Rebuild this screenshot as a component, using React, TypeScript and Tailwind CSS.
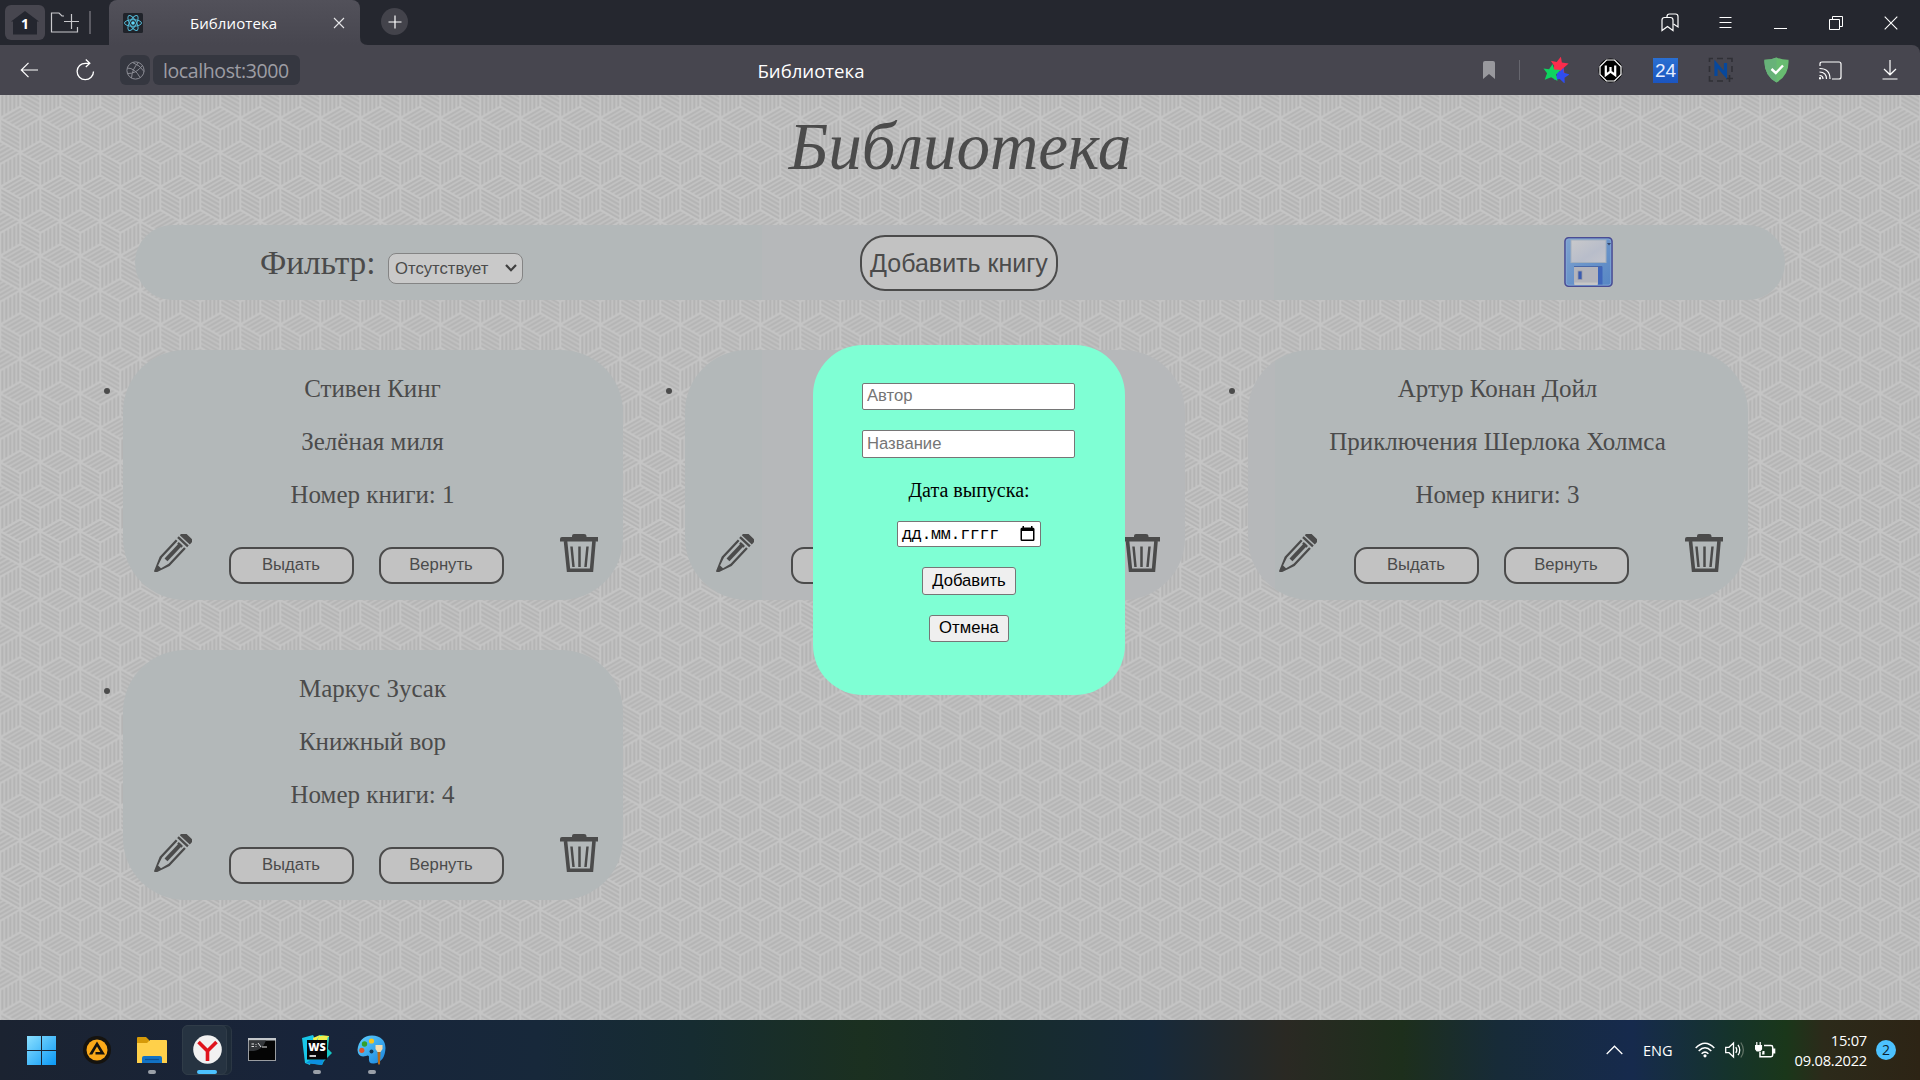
import React from "react";

const books = [
  { author: "Стивен Кинг", title: "Зелёная миля", id: "Номер книги: 1", bg: "bg-[#b3b8b9]" },
  {
    author: "",
    title: "",
    id: "",
    bg: "bg-[linear-gradient(90deg,#b3b8b9_77px,#b6b8ba_77px)]",
  },
  {
    author: "Артур Конан Дойл",
    title: "Приключения Шерлока Холмса",
    id: "Номер книги: 3",
    bg: "bg-[linear-gradient(90deg,#b6b8ba_27px,#b3b8b9_27px)]",
  },
  { author: "Маркус Зусак", title: "Книжный вор", id: "Номер книги: 4", bg: "bg-[#b3b8b9]" },
];

/* Cube wallpaper: three striped rhombic faces around every star vertex. */
const H = 11.4667;
const V = 22.9333;
function Cube({ x, y }: { x: number; y: number }) {
  const k = [0.1, 0.3, 0.5, 0.7, 0.9];
  return (
    <g transform={`translate(${x} ${y})`}>
      <g stroke="#b4b4b4" strokeWidth="2.1">
        {k.map((t) => (
          <React.Fragment key={t}>
            <line x1={-40 + 20 * t} y1={H * t} x2={-20 + 20 * t} y2={-H + H * t} />
            <line x1={-20 + 20 * t} y1={H - H * t} x2={-20 + 20 * t} y2={H - H * t + V} />
            <line x1="0" y1={V * t} x2="20" y2={V * t + H} />
          </React.Fragment>
        ))}
      </g>
      <path
        d={`M0 0L-20 ${-H}L-40 0L-20 ${H}ZM-20 ${H}V${H + V}L0 ${V}V0L20 ${H}V${H + V}L0 ${V}`}
        fill="none"
        stroke="#c5c5c5"
        strokeWidth="2"
      />
    </g>
  );
}

function Wallpaper() {
  return (
    <svg className="absolute inset-0 h-full w-full" aria-hidden="true">
      <defs>
        <pattern id="cubes" width="40" height="68.8" patternUnits="userSpaceOnUse" patternTransform="translate(0.3 23.2)">
          <rect width="40" height="68.8" fill="#c2c2c2" />
          {[-34.4, 0, 34.4, 68.8, 103.2].map((y, r) =>
            [0, 40, 80].map((x) => <Cube key={`${x}-${y}`} x={x - (r % 2 ? 0 : 20)} y={y} />)
          )}
        </pattern>
      </defs>
      <rect width="100%" height="100%" fill="url(#cubes)" />
    </svg>
  );
}

function Pencil() {
  return (
    <svg width="38" height="38" viewBox="0 0 38 38" fill="#4b4b4b">
      <g transform="translate(18.5 19) rotate(43)">
        <path d="M-6.8 -18V-20.500Q-6.800 -23.500 -3.800 -23.500H3.800Q6.800 -23.500 6.800 -20.500V-18Z" />
        <path d="M-6.800 -16.500H6.800V-14.200H-6.800Z" />
        <path
          fillRule="evenodd"
          d="M-6.800 -12.200H-4.500V10.500L-2 19H2L4.500 10.500V-12.200H6.800V11.500L1.300 25.500Q0 27 -1.300 25.500L-6.800 11.500Z"
        />
        <path d="M-2.900 -12.200H2.900V-10H-2.900Z" />
        <path d="M-2 -12.200H2V9.500H-2Z" />
      </g>
    </svg>
  );
}

function Trash() {
  return (
    <svg width="38" height="39" viewBox="0 0 38 39" fill="none" stroke="#4b4b4b">
      <path d="M0 7.500V5Q0 3 2 3H12V2Q12 0 14 0H24Q26.500 0 26.500 2V3H38V7.500Z" fill="#4b4b4b" stroke="none" />
      <path d="M5.500 7L8.500 36.300H31.500L34 7" strokeWidth="3.600" />
      <path d="M11.500 12.500L13.500 33M19.500 12.500V33M27.500 12.500L25.500 33" strokeWidth="2.500" />
    </svg>
  );
}

function Floppy() {
  return (
    <svg width="49" height="51" viewBox="0 0 49 51">
      <defs>
        <linearGradient id="fl" x1="0" y1="0" x2="1" y2="1">
          <stop offset="0" stopColor="#7fa3cf" />
          <stop offset="1" stopColor="#5585c4" />
        </linearGradient>
        <linearGradient id="flabel" x1="0" y1="0" x2="1" y2="1">
          <stop offset="0" stopColor="#c9c9cb" />
          <stop offset=".6" stopColor="#b8bdca" />
          <stop offset="1" stopColor="#c3c4cb" />
        </linearGradient>
      </defs>
      <rect x="1" y=".8" width="47" height="48.500" rx="3.500" fill="url(#fl)" stroke="#4a4c94" strokeWidth="1.600" />
      <rect x="2.300" y="2.100" width="44.400" height="46" rx="2.500" fill="none" stroke="#86a8d6" strokeWidth=".8" />
      <rect x="7" y="3" width="35" height="22.500" fill="url(#flabel)" stroke="#a3afbd" />
      <path d="M43 6h4l-2 2.500z" fill="#34466b" />
      <rect x="34" y="29.500" width="4.500" height="18" fill="#3f66bb" />
      <rect x="10" y="29.500" width="24" height="18" fill="#b3b4bb" />
      <path d="M10 29.500h28" stroke="#4967a8" />
      <rect x="10.500" y="45.500" width="23" height="2.500" fill="#c6c6c6" />
      <rect x="14" y="34" width="4" height="8.500" fill="#3a5bb0" stroke="#9a9ca8" strokeWidth=".8" />
    </svg>
  );
}

function TabStrip() {
  return (
    <div className="flex h-[45px] bg-[#25272f] text-white">
      <div className="ml-[5px] mt-[5px] flex h-[35px] w-10 items-center justify-center rounded-md bg-[#47464f]">
        <div className="grid place-items-center">
          <svg className="col-start-1 row-start-1" width="30" height="26" viewBox="0 0 30 26">
            <path d="M15 1L29 11.500H27V24.500H3V11.500H1Z" fill="#24262f" />
          </svg>
          <span className="col-start-1 row-start-1 pt-[2px] font-['Open_Sans',sans-serif] text-[14px] font-bold leading-4">1</span>
        </div>
      </div>
      <svg className="ml-[5px] mt-[11px]" width="30" height="23" viewBox="0 0 30 23" fill="none" stroke="#c9c9cd" strokeWidth="1.200">
        <path d="M14 5H12L9 2H1.500V21H27.500V16M14 10.500H29M21.500 3V18" />
      </svg>
      <div className="ml-[9px] mt-[11px] h-[23px] w-[2px] bg-[#5b5b63]" />
      <div className="ml-[18px] flex h-[45px] w-[251px] items-center rounded-t-lg bg-gradient-to-b from-[#52515a] to-[#47464f]">
        <svg className="ml-[14px]" width="20" height="20" viewBox="0 0 20 20">
          <rect width="20" height="20" rx="1.500" fill="#20232a" />
          <g fill="none" stroke="#53b9d6" strokeWidth="1">
            <ellipse cx="10" cy="10" rx="8.500" ry="3.300" />
            <ellipse cx="10" cy="10" rx="8.500" ry="3.300" transform="rotate(60 10 10)" />
            <ellipse cx="10" cy="10" rx="8.500" ry="3.300" transform="rotate(120 10 10)" />
          </g>
          <circle cx="10" cy="10" r="1.800" fill="#61dafb" />
        </svg>
        <div className="ml-[47px] w-[116px] whitespace-nowrap font-['Open_Sans',sans-serif] text-[15px] leading-5 tracking-[0.08px]">
          Библиотека
        </div>
        <svg className="ml-[27px]" width="12" height="12" viewBox="0 0 12 12" stroke="#e6e6e8" strokeWidth="1.100">
          <path d="M1 1L11 11M11 1L1 11" />
        </svg>
      </div>
      <svg width="8" height="45" viewBox="0 0 8 45">
        <path d="M0 37Q0 45 8 45H0Z" fill="#47464f" />
      </svg>
      <div className="ml-[13px] mt-2 flex h-[27px] w-[27px] items-center justify-center rounded-full bg-[#43434b]">
        <svg width="14" height="14" viewBox="0 0 14 14" stroke="#fff" strokeWidth="1.200">
          <path d="M7 0.500V13.500M.5 7H13.500" />
        </svg>
      </div>
      <div className="ml-auto mr-[2px] flex h-[45px]">
        <div className="flex w-[54px] items-center justify-center">
          <svg width="18" height="19" viewBox="0 0 18 19" fill="none" stroke="#fff" strokeWidth="1.200">
            <path d="M1 17.500V7Q1 4.500 3.500 4.500H9.500Q12 4.500 12 7V17.500L6.500 13.500Z" />
            <path d="M6 4V3.500Q6 1 8.500 1H14.500Q17 1 17 3.500V14L12.500 11" />
          </svg>
        </div>
        <div className="ml-px flex w-[55px] items-center justify-center">
          <svg width="13" height="13" viewBox="0 0 13 13" stroke="#fff" strokeWidth="1">
            <path d="M0.500 1.500H12.500M.5 6.500H12.500M.5 11.500H12.500" />
          </svg>
        </div>
        <div className="flex w-[55px] items-center justify-center">
          <div className="mt-3 h-px w-[13px] bg-white" />
        </div>
        <div className="flex w-[55px] items-center justify-center">
          <svg width="14" height="14" viewBox="0 0 14 14" fill="none" stroke="#fff">
            <path d="M.5 3.500H10.500V13.500H.5ZM3.500 3V.5H13.500V10.500H11" />
          </svg>
        </div>
        <div className="flex w-[55px] items-center justify-center">
          <svg width="14" height="14" viewBox="0 0 14 14" stroke="#fff" strokeWidth="1.100">
            <path d="M.7 .7L13.300 13.300M13.300 .7L.7 13.300" />
          </svg>
        </div>
      </div>
    </div>
  );
}

const star = "M0 -9L2.200 -3.500L9 -4L5 1.500L7.500 8L.3 5L-6 8.500L-4.500 1.500L-9 -3L-3 -3Z";

function Toolbar() {
  return (
    <div className="bg-[#25272f]">
      <div className="grid h-[50px] grid-cols-[757px_108px_1fr] items-center rounded-tr-lg bg-[#47464f] text-white">
        <div className="flex items-center">
          <svg className="ml-[20px]" width="19" height="16" viewBox="0 0 19 16" fill="none" stroke="#fff" strokeWidth="1.200">
            <path d="M18 8H1.500M8.500 .8L1.300 8L8.500 15.200" />
          </svg>
          <svg className="ml-[37px]" width="19" height="22" viewBox="0 0 19 22" fill="none" stroke="#fff" strokeWidth="1.300">
            <path d="M17.500 12.500A8.200 8.200 0 1 1 9.500 4.300H13.500M9.800 .5L13.800 4.300L9.800 8" />
          </svg>
          <div className="ml-[25px] flex h-[30px] w-[30px] items-center justify-center rounded-md bg-[#353740]">
            <svg width="19" height="19" viewBox="0 0 19 19" fill="none" stroke="#8b8c94" strokeWidth="1">
              <circle cx="9.500" cy="9.500" r="8.600" />
              <path d="M1.300 7Q9 7 14 16.500M6.500 1.500Q14 4 18 10.500M12.500 1.500Q6 8 5.500 17M1.500 12.500Q10 13 16.500 4.500" />
            </svg>
          </div>
          <div className="ml-[3px] flex h-[30px] w-[147px] items-center rounded-md bg-[#353740] pl-[10px] pt-[2px] font-['Open_Sans',sans-serif] text-[19.500px] leading-6 tracking-[-0.4px] text-[#9d9da4]">
            localhost:3000
          </div>
        </div>
        <div className="flex justify-center whitespace-nowrap pt-[2px] font-['Open_Sans',sans-serif] text-[18.600px] leading-6">
          Библиотека
        </div>
        <div className="flex items-center justify-end">
          <svg width="12" height="18" viewBox="0 0 12 18">
            <path d="M0 18V2Q0 0 2 0H10Q12 0 12 2V18L6 13Z" fill="#98989d" />
          </svg>
          <div className="ml-6 h-5 w-px bg-[#66666e]" />
          <div className="ml-2 flex w-[55px] justify-center">
            <svg width="26" height="26" viewBox="0 0 26 26">
              <path d={star} transform="translate(16 8.500) rotate(12)" fill="#fb2c4c" />
              <path d={star} transform="translate(18 18) rotate(20) scale(.85)" fill="#2f4df0" />
              <path d={star} transform="translate(8.500 15.500) rotate(8) scale(.95)" fill="#0fd45f" />
            </svg>
          </div>
          <div className="flex w-[55px] justify-center">
            <svg width="25" height="25" viewBox="0 0 25 25">
              <circle cx="12.500" cy="12.500" r="12" fill="#000" />
              <path d="M8.500 2H16.500L23 8.500V16.500L16.500 23H8.500L2 16.500V8.500Z" fill="#000" stroke="#fff" strokeWidth="1.200" />
              <path d="M7.800 7.500V17L12.500 13.500L17.200 17V7.500M12.500 9V14" fill="none" stroke="#fff" strokeWidth="2.200" />
            </svg>
          </div>
          <div className="flex w-[55px] justify-center">
            <div className="flex h-[25px] w-[25px] items-center justify-center bg-gradient-to-b from-[#2a6fd2] to-[#1b55c0] font-['Liberation_Sans',sans-serif] text-[19px] leading-none text-[#e6eeff]">
              24
            </div>
          </div>
          <div className="flex w-[55px] justify-center">
            <svg width="26" height="26" viewBox="0 0 26 26" fill="none">
              <path d="M5 1.500H1.500V5M9 1.500H15M19 1.500H24V5M24 9V15M1.500 9V15M1.500 19V24H5M9 24H15M18 21.500H25M21.500 18V25" stroke="#303036" strokeWidth="1.600" />
              <path d="M8 19V7L17.500 18V6" stroke="#07489c" strokeWidth="3.200" />
            </svg>
          </div>
          <div className="ml-px flex w-[55px] justify-center">
            <svg width="25" height="26" viewBox="0 0 25 26">
              <path d="M12.500 .5Q18 3 24.500 2.800Q25.500 18 12.500 25.500Q-.5 18 .5 2.800Q7 3 12.500 .5Z" fill="#68bc71" />
              <path d="M12.500 .5Q7 3 .5 2.800Q-.5 18 12.500 25.500Z" fill="#67b279" />
              <path d="M7.500 12L11.800 16L19 8.500" fill="none" stroke="#fff" strokeWidth="2.400" />
            </svg>
          </div>
          <div className="-ml-px flex w-[55px] justify-center">
            <svg width="23" height="19" viewBox="0 0 23 19" fill="none" stroke="#fff" strokeWidth="1.200">
              <path d="M1 5V3Q1 1 3 1H20Q22 1 22 3V16Q22 18 20 18H13" />
              <path d="M.5 14.500Q4 14.500 4 18M.5 11Q7.500 11 7.500 18M.5 7.500Q11 7.500 11 18" />
              <circle cx="1" cy="17.300" r=".6" />
            </svg>
          </div>
          <div className="flex w-[62px] justify-center pl-[2px]">
            <svg width="16" height="20" viewBox="0 0 16 20" fill="none" stroke="#fff" strokeWidth="1.200">
              <path d="M8 0V14.500M2 9L8 14.800L14 9M.5 19H15.500" />
            </svg>
          </div>
        </div>
      </div>
    </div>
  );
}

function Task({ children, dot }: { children: React.ReactNode; dot?: boolean }) {
  return (
    <div className="flex h-[60px] w-[55px] flex-col items-center">
      <div className="flex h-[60px] items-center pt-0">{children}</div>
      <div className={dot ? "-mt-[10px] h-1 w-2 shrink-0 rounded-full bg-[#9aa0a8]" : "hidden"} />
    </div>
  );
}

function Taskbar() {
  return (
    <div className="flex h-[60px] items-center bg-[linear-gradient(90deg,#1b2331_0%,#18243a_16%,#17283a_28%,#162c31_36%,#1b3020_45%,#172c2b_52%,#17293a_60%,#2a2923_67%,#1d2f1c_73%,#172b38_78%,#162a4d_85%,#15332c_90%,#1a371a_93%,#2c2a1a_95%,#2d2415_100%)] pl-[14px] font-['Open_Sans',sans-serif] text-white">
      <Task>
        <svg width="29" height="29" viewBox="0 0 29 29">
          <defs>
            <linearGradient id="win" x1="0" y1="0" x2="1" y2="1">
              <stop offset="0" stopColor="#8be0ff" />
              <stop offset="1" stopColor="#0a98f5" />
            </linearGradient>
          </defs>
          <path d="M0 0H14V14H0ZM15 0H29V14H15ZM0 15H14V29H0ZM15 15H29V29H15Z" fill="url(#win)" />
        </svg>
      </Task>
      <Task>
        <svg width="28" height="28" viewBox="0 0 28 28">
          <circle cx="14" cy="14" r="14" fill="#15130f" />
          <circle cx="14" cy="14" r="10.500" fill="#fba919" />
          <path d="M14 5.500L22 18.500H12.500V16H17.300L14 10.500L9.300 18.500H6Z" fill="#15130f" />
        </svg>
      </Task>
      <Task dot>
        <svg width="30" height="28" viewBox="0 0 30 28">
          <path d="M0 2Q0 1 1 1H9L12 4V9H0Z" fill="#d69a09" />
          <path d="M0 7H10L13 4H29Q30 4 30 5V27H0Z" fill="#ffd04a" />
          <path d="M5 27V22Q5 20 7 20H23Q25 20 25 22V27Z" fill="#1272c4" />
          <path d="M8 23.500H22" stroke="#0a4f93" strokeWidth="1.200" />
        </svg>
      </Task>
      <div className="ml-[3px] mr-[2px] grid h-[50px] w-[50px] rounded-md border border-[#2b3744] bg-[#1e2b38]">
        <div className="col-start-1 row-start-1 -ml-px -mt-px h-[50px] w-[45px] rounded-md border border-[#303c48] bg-[#263341]" />
        <div className="col-start-1 row-start-1 flex flex-col items-center">
          <svg className="mt-[9px] shrink-0" width="29" height="29" viewBox="0 0 29 29">
            <circle cx="14.500" cy="14.500" r="14.300" fill="#f1f1f1" />
            <path d="M5.500 7L14.500 16L23.500 7M14.500 15V26" fill="none" stroke="#e0141c" strokeWidth="3.600" />
          </svg>
          <div className="mt-[6px] h-1 w-5 rounded-full bg-[#4cc2ff]" />
        </div>
      </div>
      <Task>
        <svg className="-mt-[2px]" width="28" height="23" viewBox="0 0 28 23">
          <rect x=".5" y=".5" width="27" height="22" fill="#050505" stroke="#9a9da1" />
          <path d="M0 0H28V2.500H0Z" fill="#c3c7cb" />
          <path d="M1 13Q14 14 18 2.500H1Z" fill="#33363a" />
          <path d="M3.500 6H6M3.500 8.500H6M8 6V6.800M8 8V8.800M10 5L13 9M14 9H19" stroke="#e4e4e4" fill="none" />
        </svg>
      </Task>
      <Task dot>
        <svg width="30" height="30" viewBox="0 0 30 30">
          <path d="M0 3L11 0L14 6L8 30L3 28Z" fill="#18c6e8" />
          <path d="M11 3L18 0L27 1L26 8L12 10Z" fill="#f5f04a" />
          <path d="M18 0L27 2L26 14L30 18L22 26L20 30L6 28L10 12Z" fill="#15c7c4" />
          <path d="M17 1L26 1L25 6L14 9Z" fill="#eff04d" />
          <path d="M8 25L22 24L20 30L4 28Z" fill="#0d8fe0" />
          <rect x="5" y="5" width="20" height="19.500" fill="#050505" />
          <path d="M7.500 21H14" stroke="#fff" strokeWidth="1.600" />
          <text x="6.300" y="16.300" fill="#fff" fontFamily="Open Sans, sans-serif" fontSize="11" fontWeight="800" textLength="17.500" lengthAdjust="spacingAndGlyphs">WS</text>
        </svg>
      </Task>
      <Task dot>
        <svg width="29" height="30" viewBox="0 0 29 30">
          <defs>
            <linearGradient id="pal" x1="0" y1="0" x2="1" y2="1">
              <stop offset="0" stopColor="#5fd0ff" />
              <stop offset="1" stopColor="#1a84dc" />
            </linearGradient>
          </defs>
          <path d="M15 .5Q28 1 28.500 13Q28 27 17 28.500Q11 29 12 23Q12.500 19.500 9 21Q1 23 .5 15Q2 1 15 .5Z" fill="url(#pal)" />
          <circle cx="7.500" cy="9" r="2.700" fill="#33a02c" />
          <circle cx="14.500" cy="6" r="2.600" fill="#f8c51c" />
          <circle cx="4.800" cy="15.300" r="2.600" fill="#e2532b" />
          <circle cx="14.500" cy="16.500" r="2" fill="#173a55" />
          <path d="M18.500 10H25.500V14L23.500 17H20.500L18.500 14Z" fill="#f3dcb0" />
          <path d="M20.500 17H23.500L23 29Q22 30.500 21 29Z" fill="#b86a17" />
        </svg>
      </Task>
      <div className="ml-auto flex items-center">
        <svg width="17" height="10" viewBox="0 0 17 10" fill="none" stroke="#fff" strokeWidth="1.300">
          <path d="M.7 9L8.500 1.200L16.300 9" />
        </svg>
        <div className="ml-[20px] w-[30px] whitespace-nowrap pt-px text-[14.500px] leading-5">ENG</div>
        <svg className="ml-[22px]" width="20" height="16" viewBox="0 0 20 16" fill="none" stroke="#fff" strokeWidth="1.500">
          <path d="M.7 6Q10 -3.500 19.300 6M3.700 9Q10 2.500 16.300 9M6.600 11.800Q10 8.500 13.400 11.800" />
          <circle cx="10" cy="13.800" r="1.600" fill="#fff" stroke="none" />
        </svg>
        <svg className="ml-[10px]" width="20" height="18" viewBox="0 0 20 18" fill="none" stroke="#fff" strokeWidth="1.300">
          <path d="M.7 6.300H4L8.500 2V16L4 11.700H.7ZM10.800 6Q12.800 9 10.800 12M13 3.800Q16.500 9 13 14.200" />
          <path d="M15.800 1.500Q21 9 15.800 16.500" stroke="#5f7164" />
        </svg>
        <svg className="ml-[10px]" width="21" height="17" viewBox="0 0 21 17" fill="none" stroke="#fff" strokeWidth="1.500">
          <path d="M9 3.500H16Q17.700 3.500 17.700 5.200V13Q17.700 14.700 16 14.700H5V10" />
          <path d="M.5 3.500H6.500V7L5 9H2L.5 7ZM1.800 3V0M5.200 3V0" fill="#fff" strokeWidth="1.200" />
          <path d="M18 6.500H20.300V11.500H18ZM7.500 9H9.500V12.500H7Z" fill="#fff" stroke="none" />
        </svg>
        <div className="ml-[17px] w-[74px] whitespace-nowrap text-right text-[14.700px] leading-5 tracking-[-0.25px]">
          <div className="-mt-px">15:07</div>
          <div>09.08.2022</div>
        </div>
        <div className="ml-[9px] mr-[24px] flex h-5 w-5 items-center justify-center rounded-full bg-[#4cc2ff] text-[14px] leading-none text-[#0c2230]">
          2
        </div>
      </div>
    </div>
  );
}

function SmallButton({ children }: { children: React.ReactNode }) {
  return (
    <button className="h-[37px] w-[125px] rounded-[13px] border-2 border-[#4b4b4b] bg-[#c2c2c2] pb-px font-['Liberation_Sans',sans-serif] text-[16.670px] leading-none">
      {children}
    </button>
  );
}

function BookCard({ book }: { book: (typeof books)[number] }) {
  return (
    <li className={`relative flex h-[250px] w-[500px] flex-col items-center rounded-[62px] pt-[24px] text-[25px] leading-[29px] ${book.bg}`}>
      <span className="absolute -left-[19px] top-[38px] h-[6px] w-[6px] rounded-full bg-[#4b4b4b]" />
      <p className="h-[53px] whitespace-nowrap">{book.author}</p>
      <p className="h-[53px] whitespace-nowrap">{book.title}</p>
      <p className="h-[53px] whitespace-nowrap">{book.id}</p>
      <div className="flex w-full items-start pl-[31px] pr-[25px] pt-[1px]">
        <Pencil />
        <div className="ml-[37px] mt-[13px] flex gap-[25px]">
          <SmallButton>Выдать</SmallButton>
          <SmallButton>Вернуть</SmallButton>
        </div>
        <div className="ml-auto">
          <Trash />
        </div>
      </div>
    </li>
  );
}

function AddModal() {
  return (
    <div className="absolute left-[813px] top-[250px] flex h-[350px] w-[312px] flex-col items-center rounded-[50px] bg-[#7fffd4] pt-[38px] font-['Liberation_Sans',sans-serif] text-[16.670px] text-black">
      <input
        placeholder="Автор"
        className="mr-px h-[27px] w-[213px] rounded-[2px] border border-[#767676] bg-white pb-[2px] pl-[4px] leading-none placeholder:text-[#757575]"
      />
      <input
        placeholder="Название"
        className="mr-px mt-5 h-[28px] w-[213px] rounded-[2px] border border-[#767676] bg-white pb-px pl-[4px] leading-none placeholder:text-[#757575]"
      />
      <div className="mt-[21px] h-[22px] font-['Liberation_Serif',serif] text-[20px] leading-[23px]">Дата выпуска:</div>
      <div className="mt-[20px] flex h-[26px] w-[144px] items-center justify-between rounded-[2px] border border-[#767676] bg-white pl-[4px] pr-[5px] font-['Liberation_Mono',monospace] text-[16.670px] leading-none">
        <span className="whitespace-nowrap pt-[2px] tracking-[-0.3px]">дд.мм.гггг</span>
        <svg width="15" height="16" viewBox="0 0 15 16">
          <path fillRule="evenodd" d="M2.500 0H4V1.500H11V0H12.500V1.500Q14.500 1.500 14.500 3V13.500Q14.500 15 13 15H2Q.5 15 .5 13.500V3Q.5 1.500 2.500 1.500ZM2 5V13.500H13V5Z" />
        </svg>
      </div>
      <button className="mt-[20px] h-[28px] w-[94px] rounded-[3px] border border-[#767676] bg-[#efefef] leading-none">Добавить</button>
      <button className="mt-[20px] h-[27px] w-[80px] rounded-[3px] border border-[#767676] bg-[#efefef] leading-none">Отмена</button>
    </div>
  );
}

export default function App() {
  return (
    <div className="flex h-[1080px] w-[1920px] flex-col overflow-hidden">
      <TabStrip />
      <Toolbar />
      <main className="relative h-[925px] font-['Liberation_Serif',serif] text-[#4b4b4b]">
        <Wallpaper />
        <div className="relative flex flex-col">
          <h1 className="mt-[13px] h-[77px] whitespace-nowrap text-center text-[67px] italic leading-[76px]">Библиотека</h1>
          <div className="mx-[135px] mt-[40px] grid h-[75px] grid-cols-3 items-center rounded-[37.500px] bg-[linear-gradient(90deg,#b3b8b9_627px,#b6b8ba_627px,#b6b8ba_1139px,#b3b8b9_1139px)]">
            <div className="flex items-center pl-[125px]">
              <span className="w-[116px] whitespace-nowrap pt-px text-[33.300px] leading-9">Фильтр:</span>
              <div className="ml-[12px] mt-[11px] flex h-[31px] w-[135px] items-center justify-between rounded-lg border border-[#848484] bg-[#c9c9c9] pl-[6px] pr-[5px] font-['Liberation_Sans',sans-serif] text-[16.670px] leading-none">
                <span className="whitespace-nowrap pt-[2px]">Отсутствует</span>
                <svg width="12" height="8" viewBox="0 0 12 8" fill="none" stroke="#404040" strokeWidth="2.200">
                  <path d="M1 1L6 6.200L11 1" />
                </svg>
              </div>
            </div>
            <button className="ml-[175px] h-[56px] w-[198px] whitespace-nowrap rounded-[25px] border-2 border-[#4b4b4b] bg-[#c2c2c2] pt-px font-['Liberation_Sans',sans-serif] text-[25px] leading-none">
              Добавить книгу
            </button>
            <div className="pl-[329px]">
              <Floppy />
            </div>
          </div>
          <ul className="ml-[122.500px] mt-[50px] grid grid-cols-[repeat(3,500px)] gap-x-[62.500px] gap-y-[50px]">
            {books.map((b, i) => (
              <BookCard key={i} book={b} />
            ))}
          </ul>
        </div>
        <AddModal />
      </main>
      <Taskbar />
    </div>
  );
}
